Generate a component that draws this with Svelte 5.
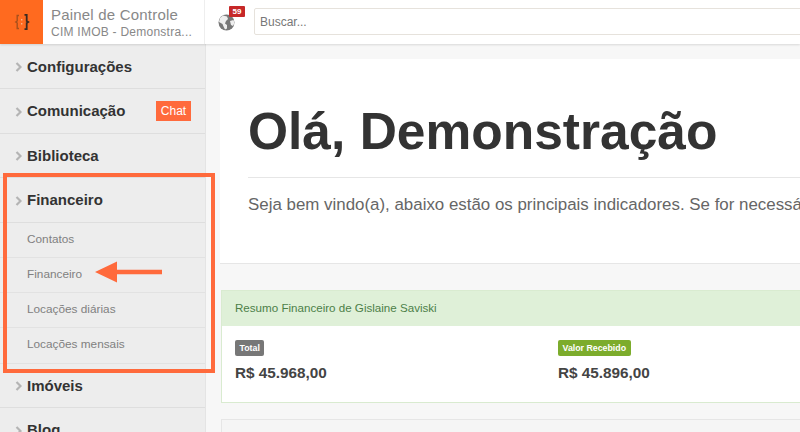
<script>
  const menu = [
    { label: 'Configurações' },
    { label: 'Comunicação', chat: true },
    { label: 'Biblioteca' },
    { label: 'Financeiro', children: ['Contatos', 'Financeiro', 'Locações diárias', 'Locações mensais'] },
    { label: 'Imóveis' },
    { label: 'Blog' }
  ];
</script>

<div class="page">
  <header class="topbar">
    <div class="logo">
      <svg width="16" height="18" viewBox="0 0 16 18" fill="none">
        <path d="M5 2.500H3.200V8L1.800 9l1.400 1V15.500H5" stroke="#a8501c" stroke-width="1.400" />
        <path d="M10.500 1.800H12.700V8L14.200 9l-1.500 1V16.200H10.500" stroke="#3c2a20" stroke-width="1.800" />
        <path d="M7.700 6v1.500M7.700 10v1.500" stroke="#f7b488" stroke-width="1.400" />
      </svg>
    </div>
    <div class="brand">
      <div class="brand-title">Painel de Controle</div>
      <div class="brand-sub">CIM IMOB - Demonstra...</div>
    </div>
    <div class="tools">
      <div class="globe">
        <svg width="17" height="17" viewBox="0 0 17 17">
          <circle cx="8.500" cy="8.500" r="8" fill="#777" />
          <path d="M5 1.500l4 1 1 2.500-2 2-1 2.500 2 1.500 0 3.500-2 1-1.500-3-1-2.500L1 8l1-4zM12 7l3.500-1 1 3-1.500 3-2-1z" fill="#eee" />
        </svg>
        <span class="badge">59</span>
      </div>
      <div class="search">Buscar...</div>
    </div>
  </header>

  <div class="body">
    <aside class="sidebar">
      {#each menu as item}
        <div class="item" class:open={item.children}>
          <svg class="chev" width="7" height="10" viewBox="0 0 7 10"><path d="M1.500 1l4 4-4 4" fill="none" stroke="#b4b4b4" stroke-width="2.200" /></svg>
          <span class="item-label">{item.label}</span>
          {#if item.chat}<span class="chat">Chat</span>{/if}
        </div>
        {#if item.children}
          {#each item.children as child}
            <div class="sub">{child}</div>
          {/each}
        {/if}
      {/each}
    </aside>

    <main class="content">
      <section class="hero">
        <h1>Olá, Demonstração</h1>
        <hr />
        <p>Seja bem vindo(a), abaixo estão os principais indicadores. Se for necessário, utilize o menu ao lado para navegar.</p>
      </section>

      <section class="panel">
        <div class="panel-head">Resumo Financeiro de Gislaine Saviski</div>
        <div class="panel-body">
          <div class="stat">
            <span class="tag grey">Total</span>
            <div class="value">R$ 45.968,00</div>
          </div>
          <div class="stat">
            <span class="tag green">Valor Recebido</span>
            <div class="value">R$ 45.896,00</div>
          </div>
        </div>
      </section>

      <section class="panel-next"></section>
    </main>
  </div>

  <div class="highlight"></div>
  <svg class="arrow" width="70" height="24" viewBox="0 0 70 24">
    <path d="M1 12L23 1.500v8.300h45v4.400H23V22.500z" fill="#ff6a3c" />
  </svg>
</div>

<style>
  :global(body) {
    margin: 0;
    background: #f7f7f7;
  }
  .page {
    position: relative;
    width: 800px;
    height: 432px;
    overflow: hidden;
    font-family: "Liberation Sans", Arial, sans-serif;
    background: #f7f7f7;
  }
  .topbar {
    display: flex;
    height: 44px;
    background: #fff;
    box-shadow: 0 1px 2px rgba(0, 0, 0, 0.12);
    position: relative;
    z-index: 1;
  }
  .logo {
    width: 43px;
    background: #ff6a1f;
    display: flex;
    align-items: center;
    justify-content: center;
  }
  .brand {
    width: 162px;
    box-sizing: border-box;
    padding: 6px 0 0 8px;
    border-right: 1px solid #eee;
    color: #888;
  }
  .brand-title {
    font-size: 15px;
    line-height: 17px;
    letter-spacing: 0.2px;
  }
  .brand-sub {
    font-size: 12px;
    line-height: 16px;
    letter-spacing: 0.25px;
    margin-top: 1px;
  }
  .tools {
    flex: 1;
    display: flex;
    align-items: center;
    padding-left: 13px;
  }
  .globe {
    position: relative;
    width: 17px;
    height: 17px;
    margin-top: 1px;
    margin-right: 19px;
  }
  .globe svg {
    display: block;
  }
  .badge {
    position: absolute;
    top: -8px;
    left: 11px;
    width: 16px;
    height: 11px;
    background: #c62828;
    border-radius: 1px;
    color: #fff;
    font-size: 8px;
    font-weight: 700;
    line-height: 11px;
    text-align: center;
  }
  .search {
    flex: 1;
    height: 27px;
    margin-top: -1px;
    margin-right: -10px;
    box-sizing: border-box;
    padding-left: 5px;
    border: 1px solid #e6e2dc;
    border-radius: 2px;
    color: #777;
    font-size: 12px;
    line-height: 26px;
  }
  .body {
    display: flex;
    height: 388px;
  }
  .sidebar {
    width: 205px;
    flex: none;
    padding-top: 0.5px;
    background: #ededed;
    border-right: 1px solid #e4e4e4;
  }
  .item {
    height: 44.500px;
    box-sizing: border-box;
    display: flex;
    align-items: center;
    padding-left: 15px;
    border-bottom: 1px solid #dedede;
  }
  .chev {
    margin-right: 5px;
    margin-top: 2px;
  }
  .item-label {
    font-size: 15px;
    font-weight: 700;
    color: #333;
  }
  .chat {
    margin-left: auto;
    margin-right: 14px;
    width: 35px;
    height: 20px;
    background: #ff6a3c;
    color: #fff;
    font-size: 12px;
    line-height: 20px;
    text-align: center;
  }
  .sub {
    height: 35.300px;
    box-sizing: border-box;
    padding-left: 27px;
    border-bottom: 1px solid #e2e2e2;
    color: #808080;
    font-size: 11.800px;
    line-height: 33px;
  }
  .content {
    flex: 1;
    min-width: 0;
    padding: 15px 0 0 14px;
    overflow: hidden;
  }
  .hero {
    height: 205px;
    box-sizing: border-box;
    background: #fff;
    border-bottom: 1px solid #e6e6e6;
    padding: 43px 0 0 28px;
    white-space: nowrap;
  }
  h1 {
    margin: 0;
    font-size: 51.500px;
    line-height: 58px;
    font-weight: 700;
    color: #333;
  }
  hr {
    border: 0;
    border-top: 1px solid #e6e6e6;
    margin: 17px 0 0;
  }
  p {
    margin: 17px 0 0;
    font-size: 16.900px;
    line-height: 20px;
    color: #666;
  }
  .panel {
    margin-top: 26px;
    height: 113px;
    box-sizing: border-box;
    margin-left: 1px;
    background: #fff;
    border: 1px solid #d9ebd0;
    border-right: 0;
  }
  .panel-head {
    height: 35px;
    box-sizing: border-box;
    padding-left: 13px;
    background: #dff0d8;
    color: #4c7f48;
    font-size: 11.600px;
    line-height: 33px;
  }
  .panel-body {
    display: grid;
    grid-template-columns: 323px 1fr;
    padding: 14px 0 0 13px;
  }
  .tag {
    display: inline-block;
    height: 16px;
    padding: 0 4.500px;
    border-radius: 2px;
    color: #fff;
    font-size: 8.800px;
    font-weight: 700;
    line-height: 16px;
    vertical-align: top;
  }
  .grey {
    background: #777;
  }
  .green {
    background: #7cac2c;
  }
  .value {
    margin-top: 6px;
    font-size: 15.300px;
    font-weight: 700;
    line-height: 18px;
    color: #444;
  }
  .panel-next {
    margin: 16px 0 0 1px;
    height: 60px;
    background: #f5f5f5;
    border: 1px solid #e6e6e6;
    border-right: 0;
  }
  .highlight {
    position: absolute;
    left: 3px;
    top: 173px;
    width: 212px;
    height: 200px;
    box-sizing: border-box;
    border: 4px solid #ff6a3c;
  }
  .arrow {
    position: absolute;
    left: 94px;
    top: 260px;
  }
</style>
